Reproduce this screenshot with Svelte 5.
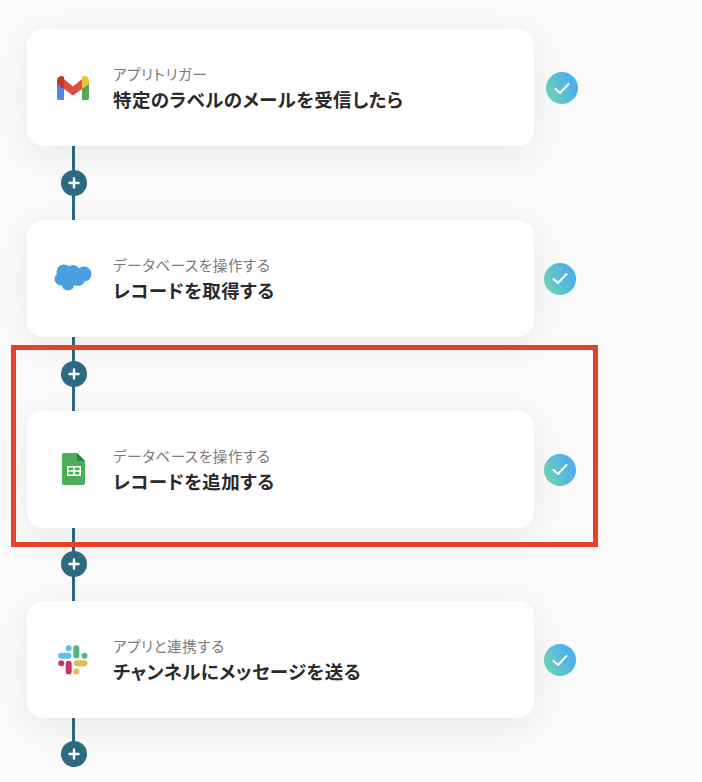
<script>
	const steps = [
		{ icon: 'gmail', label: 'アプリトリガー', title: '特定のラベルのメールを受信したら' },
		{ icon: 'salesforce', label: 'データベースを操作する', title: 'レコードを取得する' },
		{ icon: 'sheets', label: 'データベースを操作する', title: 'レコードを追加する' },
		{ icon: 'slack', label: 'アプリと連携する', title: 'チャンネルにメッセージを送る' }
	];
</script>

<main class="flow">
	{#each steps as step, i}
		<section class="step">
			<div class="card">
				<div class="logo">
					{#if step.icon === 'gmail'}
						<svg width="32" height="24" viewBox="0 0 32 24">
							<path d="M0 6v16a2 2 0 0 0 2 2h5V11z" fill="#4f86ec" />
							<path d="M32 6v16a2 2 0 0 1-2 2h-5V11z" fill="#57a55b" />
							<path d="M7 3 16 10.500 25 3v10l-9 6.500L7 13z" fill="#df4e3f" />
							<path d="M0 4.500C0 .5 4.500-1 7 1v12L0 8z" fill="#c0392b" />
							<path d="M32 4.500C32 .5 27.500-1 25 1v12l7-5z" fill="#f4bd3c" />
						</svg>
					{:else if step.icon === 'salesforce'}
						<svg width="38" height="30" viewBox="0 0 38 30">
							<g fill="#4a9fe0">
								<circle cx="10" cy="9" r="7.500" />
								<circle cx="19" cy="9" r="7" />
								<circle cx="30" cy="11" r="7.500" />
								<circle cx="7" cy="16" r="6.500" />
								<circle cx="14" cy="21" r="6.500" />
								<circle cx="24" cy="16" r="7" />
							</g>
						</svg>
					{:else if step.icon === 'sheets'}
						<svg width="23" height="32" viewBox="0 0 23 32">
							<path d="M2 0h13l8 8v22a2 2 0 0 1-2 2H2a2 2 0 0 1-2-2V2a2 2 0 0 1 2-2z" fill="#4caf57" />
							<path d="M15 0l8 8h-8z" fill="#2f7d3c" />
							<path d="M5 13h14v10H5zM6.500 14.500v2.800h4.700v-2.800zm6.300 0v2.800h4.700v-2.800zm-6.300 4.300v2.800h4.700v-2.800zm6.300 0v2.800h4.700v-2.800z" fill="#fff" fill-rule="evenodd" />
						</svg>
					{:else}
						<svg width="30" height="30" viewBox="0 0 30 30">
							<g fill="none" stroke-linecap="round" stroke-width="6">
								<path d="M3.200 10.700h7.200" stroke="#5fc0ec" />
								<path d="M18.300 3.200v7.200" stroke="#54b48a" />
								<path d="M10.700 18.800v7.600" stroke="#d0315f" />
								<path d="M18.800 18.300h7.600" stroke="#e9b84a" />
							</g>
							<circle cx="10.700" cy="3.300" r="3" fill="#5fc0ec" />
							<circle cx="26.500" cy="10.700" r="3" fill="#54b48a" />
							<circle cx="3.300" cy="18.300" r="3" fill="#d0315f" />
							<circle cx="18.300" cy="26.500" r="3" fill="#e9b84a" />
						</svg>
					{/if}
				</div>
				<div class="text">
					<p class="label">{step.label}</p>
					<p class="title">{step.title}</p>
				</div>
			</div>
			<div class="done" class:first={i === 0}>
				<svg width="16" height="13" viewBox="0 0 16 13">
					<path d="M1.500 7 6 11 14.500 2" fill="none" stroke="#fff" stroke-width="2" stroke-linecap="round" stroke-linejoin="round" />
				</svg>
			</div>
		</section>
		<div class="connector" class:last={i === steps.length - 1}>
			<button class="add" aria-label="追加">
				<svg width="12" height="12" viewBox="0 0 12 12">
					<path d="M6 1.500v9M1.500 6h9" stroke="#fff" stroke-width="2.400" stroke-linecap="round" />
				</svg>
			</button>
		</div>
	{/each}
	<div class="highlight"></div>
</main>

<style>
	:global(body) {
		background: #fafafa;
		font-family: 'Noto Sans CJK JP', 'Noto Sans', sans-serif;
	}
	.flow {
		position: relative;
		height: 782px;
		overflow: hidden;
		padding-top: 29px;
		box-sizing: border-box;
	}
	.step {
		display: flex;
		align-items: center;
		margin-left: 27px;
	}
	.card {
		display: flex;
		align-items: center;
		width: 507px;
		height: 117px;
		box-sizing: border-box;
		background: #fff;
		border-radius: 16px;
		box-shadow: 0 8px 36px rgba(0, 0, 0, 0.07);
	}
	.logo {
		display: flex;
		align-items: center;
		justify-content: center;
		width: 54px;
		margin: 0 13px 0 19px;
		flex: none;
	}
	.text {
		font-feature-settings: 'palt';
	}
	.label {
		margin: 0;
		padding-top: 1px;
		font-size: 14.5px;
		line-height: 20px;
		letter-spacing: 0.65px;
		color: #7a7a7a;
	}
	.title {
		margin: 2px 0 0;
		font-size: 18.5px;
		line-height: 26px;
		letter-spacing: 0.4px;
		font-weight: 700;
		color: #2a2a2a;
	}
	.done {
		display: flex;
		align-items: center;
		justify-content: center;
		width: 32px;
		height: 32px;
		margin: 1px 0 0 10px;
		border-radius: 50%;
		background: linear-gradient(65deg, #6dd3b5 10%, #4fb0ea 75%);
	}
	.done.first {
		margin-left: 12px;
	}
	.connector {
		display: flex;
		align-items: center;
		justify-content: center;
		width: 3px;
		height: 73.8px;
		margin-left: 72px;
		background: #2c6a82;
	}
	.connector.last {
		height: 49px;
		align-items: flex-end;
	}
	.add {
		display: flex;
		align-items: center;
		justify-content: center;
		flex: none;
		width: 26px;
		height: 26px;
		padding: 0;
		border: 0;
		border-radius: 50%;
		background: #2c6a82;
	}
	.highlight {
		position: absolute;
		left: 11px;
		top: 345px;
		width: 587px;
		height: 202px;
		box-sizing: border-box;
		border: 5px solid #e8412a;
	}
</style>
